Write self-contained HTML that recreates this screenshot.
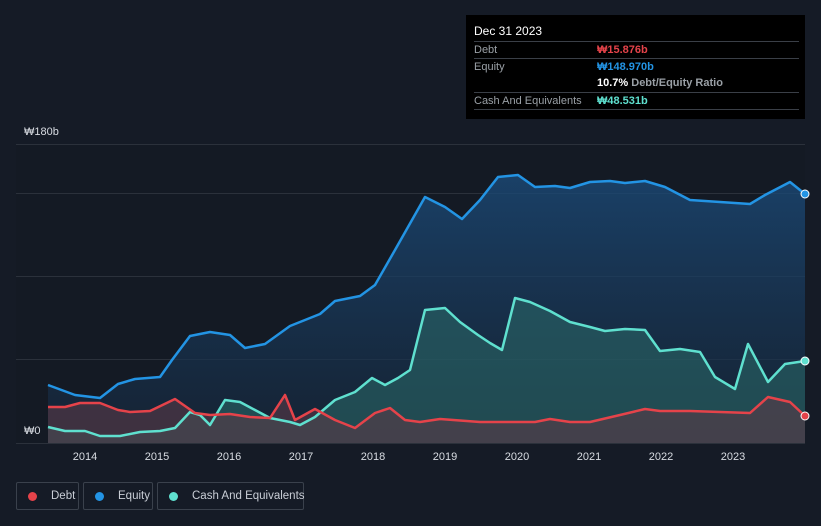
<!DOCTYPE html>
<html><head><meta charset="utf-8"><style>
body{margin:0;width:821px;height:526px;background:#151b26;font-family:"Liberation Sans",sans-serif;overflow:hidden;position:relative}
.tip{position:absolute;left:466px;top:15px;width:339px;height:104px;background:#000;color:#fff;font-size:11px}
.row{position:absolute;left:8px;right:6px;border-top:1px solid #3a3f47;height:17px;line-height:17px;color:#9aa0a6}
.row span{position:absolute;left:123px;font-weight:bold}
.leg{position:absolute;top:482px;height:28px;border:1px solid #3a414c;border-radius:2px;color:#c9ced6;font-size:11.5px;line-height:27px;box-sizing:border-box;padding-left:34px;white-space:nowrap}
.leg i{position:absolute;left:11px;top:9px;width:9px;height:9px;border-radius:50%}
.ax{position:absolute;color:#d8dce2;font-size:11px}
</style></head><body>
<svg width="821" height="526" style="position:absolute;left:0;top:0">
<defs><linearGradient id="g" x1="0" y1="0" x2="0" y2="1"><stop offset="0" stop-color="#1b4a78" stop-opacity=".8"/><stop offset="1" stop-color="#16283d" stop-opacity=".6"/></linearGradient></defs>
<rect x="16" y="144" width="789" height="299" fill="#141a24"/>
<g stroke="#2b313b" stroke-width="1"><line x1="16" y1="144.5" x2="805" y2="144.5"/><line x1="16" y1="193.5" x2="805" y2="193.5"/><line x1="16" y1="276.5" x2="805" y2="276.5"/><line x1="16" y1="359.5" x2="805" y2="359.5"/><line x1="16" y1="443.5" x2="805" y2="443.5"/></g>
<path fill="url(#g)" d="M48,385 L75,395 100,398 118,384 135,379 160,377 172,360 190,336 210,332 230,335 245,348 265,344 290,326 320,314 335,301 360,296 375,285 395,250 425,197 445,207 462,219 480,200 498,177 518,175 535,187 555,186 570,188 590,182 610,181 625,183 645,181 665,187 690,200 720,202 750,204 765,195 790,182 805,194 L805,443 48,443Z"/>
<path fill="#2b6b6a" fill-opacity=".55" d="M48,427 L65,431 85,431 100,436 120,436 140,432 160,431 175,428 190,412 200,415 210,425 225,400 240,402 255,410 270,418 290,422 300,425 315,417 335,400 355,392 372,378 385,385 398,378 410,370 425,310 445,308 460,322 478,335 490,343 502,350 515,298 530,302 550,311 570,322 590,327 605,331 625,329 645,330 660,351 680,349 700,352 715,377 735,389 748,344 768,382 785,364 805,361 L805,443 48,443Z"/>
<path fill="#5a3a48" fill-opacity=".6" d="M48,407 L65,407 80,403 100,403 118,410 130,412 150,411 175,399 195,413 210,415 230,414 250,417 270,418 285,395 295,420 315,409 335,420 355,428 375,413 390,408 405,420 420,422 440,419 480,422 535,422 550,419 570,422 590,422 620,415 645,409 660,411 690,411 750,413 768,397 790,402 805,416 L805,443 48,443Z"/>
<g fill="none" stroke-width="2.5" stroke-linejoin="round">
<path stroke="#2394e4" d="M48,385 L75,395 100,398 118,384 135,379 160,377 172,360 190,336 210,332 230,335 245,348 265,344 290,326 320,314 335,301 360,296 375,285 395,250 425,197 445,207 462,219 480,200 498,177 518,175 535,187 555,186 570,188 590,182 610,181 625,183 645,181 665,187 690,200 720,202 750,204 765,195 790,182 805,194"/>
<path stroke="#5fe0cf" d="M48,427 L65,431 85,431 100,436 120,436 140,432 160,431 175,428 190,412 200,415 210,425 225,400 240,402 255,410 270,418 290,422 300,425 315,417 335,400 355,392 372,378 385,385 398,378 410,370 425,310 445,308 460,322 478,335 490,343 502,350 515,298 530,302 550,311 570,322 590,327 605,331 625,329 645,330 660,351 680,349 700,352 715,377 735,389 748,344 768,382 785,364 805,361"/>
<path stroke="#e5434a" d="M48,407 L65,407 80,403 100,403 118,410 130,412 150,411 175,399 195,413 210,415 230,414 250,417 270,418 285,395 295,420 315,409 335,420 355,428 375,413 390,408 405,420 420,422 440,419 480,422 535,422 550,419 570,422 590,422 620,415 645,409 660,411 690,411 750,413 768,397 790,402 805,416"/>
</g>
<circle cx="805" cy="194" r="4" fill="#2394e4" stroke="#fff" stroke-width="1"/>
<circle cx="805" cy="361" r="4" fill="#5fe0cf" stroke="#fff" stroke-width="1"/>
<circle cx="805" cy="416" r="4" fill="#e5434a" stroke="#fff" stroke-width="1"/>
<g fill="#d8dce2" font-size="11" font-family="Liberation Sans" text-anchor="middle">
<text x="85" y="460">2014</text><text x="157" y="460">2015</text><text x="229" y="460">2016</text><text x="301" y="460">2017</text><text x="373" y="460">2018</text><text x="445" y="460">2019</text><text x="517" y="460">2020</text><text x="589" y="460">2021</text><text x="661" y="460">2022</text><text x="733" y="460">2023</text>
</g>
</svg>
<div class="tip">
<div style="position:absolute;left:8px;top:9px;font-size:12px">Dec 31 2023</div>
<div class="row" style="top:26px">Debt<span style="color:#e5434a">₩15.876b</span></div>
<div class="row" style="top:43px">Equity<span style="color:#2394e4">₩148.970b</span></div>
<div class="row" style="top:60px;border-top:none"><span style="color:#fff">10.7% <b style="color:#9aa0a6">Debt/Equity Ratio</b></span></div>
<div class="row" style="top:77px">Cash And Equivalents<span style="color:#5fe0cf">₩48.531b</span></div>
<div class="row" style="top:94px;height:0"></div>
</div>
<div class="ax" style="left:24px;top:126px">₩180b</div>
<div class="ax" style="left:24px;top:425px">₩0</div>
<div class="leg" style="left:16px;width:63px"><i style="background:#e5434a"></i>Debt</div>
<div class="leg" style="left:83px;width:70px"><i style="background:#2394e4"></i>Equity</div>
<div class="leg" style="left:157px;width:147px"><i style="background:#5fe0cf"></i>Cash And Equivalents</div>
</body></html>
